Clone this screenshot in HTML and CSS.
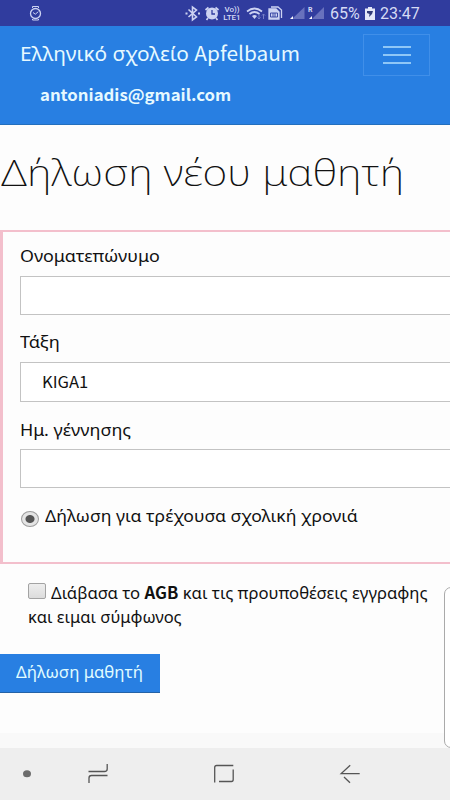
FILE: index.html
```html
<!DOCTYPE html>
<html lang="el">
<head>
<meta charset="utf-8">
<title>Δήλωση νέου μαθητή</title>
<link rel="stylesheet" href="styles.css">
</head>
<body>
<div class="status">
  <svg class="status-icons" width="335" height="26" viewBox="0 0 335 26" fill="none" stroke="#cdd3f2" stroke-width="1.3">
    <circle cx="35.500" cy="13.500" r="5"/><path d="M32.500 8V6.500h6V8M32.500 19v1h6v-1M33 12.500l2.300 1.700 3-2.500" stroke-width="1"/>
    <path d="M188.500 9.500l8 7.500-4 3V7l4 3-8 7" stroke-width="1.600"/><path d="M185.500 13.500h2M198 13.500h2" stroke-width="2"/>
    <circle cx="212" cy="13.500" r="6" fill="#cdd3f2" stroke="none"/><path d="M205.500 10l3-2.500M218.500 10l-3-2.500M208 18l-1.500 2M216 18l1.500 2" stroke-width="1.700"/><path d="M212 10v4h3" stroke="#303c9e"/>
    <path d="M247 11.500q7.500-6 15 0M249.500 14q5-4 10 0" stroke-width="1.700"/><path d="M252 16q2.500-2 5 0l-2.500 3z" fill="#cdd3f2" stroke="none"/>
    <path d="M259 14v5m-1.500-1.500L259 19l1.500-1.500M263.500 19v-5m-1.500 1.500l1.500-1.500 1.500 1.500" stroke="#7780c7" stroke-width="1"/>
    <path d="M271 7h7l3.500 3v8" /><path d="M269 9h7l3 3v7h-10z" fill="#cdd3f2"/><path d="M270.500 13h7v4h-7zM273 13v4M275 13v4" stroke="#303c9e" stroke-width=".9"/>
    <path d="M304.500 7v12H292z" fill="#6871bd" stroke="none"/><path d="M290 19h3v-3z" fill="#fff" stroke="none"/>
    <path d="M324 7v12h-12z" fill="#6871bd" stroke="none"/><path d="M309 19h3v-3z" fill="#fff" stroke="none"/>
  </svg>
  <span class="volte"><b>Vo))</b><b>LTE1</b></span>
  <span class="roaming">R</span>
  <span class="percent">65%</span>
  <svg class="battery" width="12" height="15" viewBox="0 0 12 15"><path d="M4 1h4v1.500h3V14H1V2.500h3z" fill="#e5e8f8"/><path d="M3 5h6L8 8l-3 3 .5-3L3 7z" fill="#343d78"/></svg>
  <span class="time">23:47</span>
</div>
<header>
  <div class="brand"><span class="brand-text">Ελληνικό σχολείο <span class="latin">Apfelbaum</span></span></div>
  <div class="mail latin"><span class="mail-text">antoniadis@gmail.com</span></div>
  <button class="menu" aria-label="Μενού"><i></i><i></i><i></i></button>
</header>
<main>
  <h1><span>Δήλωση νέου μαθητή</span></h1>
  <section class="panel">
    <label class="l1"><span>Ονοματεπώνυμο</span></label>
    <div class="field f1"></div>
    <label class="l2"><span>Τάξη</span></label>
    <div class="field f2 latin"><span>KIGA1</span></div>
    <label class="l3"><span>Ημ. γέννησης</span></label>
    <div class="field f3"></div>
    <div class="choice"><i class="radio"></i><span class="t-choice">Δήλωση για τρέχουσα σχολική χρονιά</span></div>
  </section>
  <div class="terms">
    <div class="line"><i class="check"></i><span class="t-terms1">Διάβασα το <b class="latin">AGB</b> και τις προυποθέσεις εγγραφης</span></div>
    <div class="line"><span class="t-terms2">και ειμαι σύμφωνος</span></div>
  </div>
  <button class="submit"><span>Δήλωση μαθητή</span></button>
</main>
<div class="edge"></div>
<nav>
  <svg width="450" height="52" viewBox="0 0 450 52" fill="none" stroke="#555" stroke-width="1.300">
    <ellipse cx="27" cy="25.700" rx="4" ry="3.500" fill="#6c6c6c" stroke="none"/>
    <path d="M88.500 23.500h16q2.700 0 2.700-2.500v-5M107.500 27.500h-16q-2.500 0-2.500 2.500v5"/>
    <path d="M214.700 34.500V19.500q0-2 2-2h16.600M219 33.500h12.500q1.700 0 1.700-2V21.500"/>
    <path d="M359.700 25.600h-18.500l9-8.400M344 29l6 5.800"/>
  </svg>
</nav>
</body>
</html>
```
FILE: styles.css
```css
* { box-sizing: border-box; }
body {
  margin: 0; width: 450px; height: 800px; overflow: hidden; position: relative;
  display: flex; flex-direction: column; background: #fdfdfd; color: #111;
  font: 16.5px/24px "Noto Sans", "Open Sans", sans-serif;
}
span { white-space: nowrap; }
.latin { font-family: "Noto Sans CJK SC", "Noto Sans", sans-serif; }
.status { height: 26px; flex: none; position: relative; background: #303c9e; color: #d6dbf4; font-family: Roboto, sans-serif; }
.status-icons { display: block; }
.status > span, .battery { position: absolute; }
.volte { left: 222px; top: 6px; width: 20px; font-size: 8px; line-height: 7.5px; text-align: center; }
.volte b { display: block; font-weight: 500; }
.roaming { left: 308px; top: 6px; font-size: 7px; line-height: 8px; font-weight: 700; }
.percent { left: 330px; top: 2px; font-size: 16px; line-height: 24px; }
.battery { left: 364px; top: 6px; }
.time { left: 380px; top: 2px; font-size: 16px; line-height: 24px; }
header { height: 99px; flex: none; position: relative; background: #287fe2; color: #e6f9ff; border-bottom: 1px solid #236fbd; }
.brand { padding: 13px 0 0 20px; font-size: 20px; line-height: 30px; }
.brand .latin { line-height: 20px; }
.mail { padding: 13px 0 0 40px; font-size: 16px; line-height: 24px; font-weight: 700; }
.brand-text, .mail-text, h1 span, label span, .t-choice, .t-terms1, .submit span, .f2 span { display: inline-block; transform-origin: 0 50%; }
.brand-text { transform: scaleX(1.041); }
.mail-text { transform: scaleX(1.046); }
h1 span { transform: scaleX(1.15); }
label span { transform: scaleX(1.083); }
.l2 span { transform: scaleX(1.1); }
.f2 span { transform: scaleX(1.035); }
.t-choice { transform: scaleX(1.065); }
.t-terms1 { transform: scaleX(1.01); }
.submit span { transform: scaleX(1.016); }
.menu {
  position: absolute; left: 363px; top: 8px; width: 67px; height: 42px; padding: 0;
  display: flex; flex-direction: column; align-items: center; justify-content: center; gap: 6px;
  border: 1px solid #408fe9; background: none;
}
.menu i { width: 28px; height: 2px; background: #8fc7f7; }
main { flex: 1; }
h1 { margin: 0; padding: 21px 0 0 1px; height: 105px; font-size: 37px; line-height: 52px; font-weight: 200; }
.panel { height: 334px; padding: 12px 0 0 17px; border: solid #f3bfcc; border-width: 2px 0 2px 3px; }
label { display: block; height: 24px; line-height: 24px; }
.field { border: 1px solid #c3c3c3; border-right: 0; height: 39px; background: #fff; }
.f1 { margin: 8px 0 15px; }
.f2 { margin: 8px 0 16px; height: 40px; padding-left: 21px; font-size: 16px; line-height: 36px; }
.f3 { margin: 7px 0 16px; }
.choice { display: flex; }
.radio { width: 18px; height: 16px; margin: 7px 6px 0 1px; border: 1px solid #9b9b9b; border-radius: 50%; background: radial-gradient(ellipse, #555 0 4px, #e4e4e4 5px); }
.terms { padding: 17px 0 0 28px; height: 90px; }
.line { display: flex; height: 24px; }
.line b { line-height: 20px; }
.check { width: 18px; height: 16px; margin: 2px 5px 0 0; border: 1px solid #a3a3a3; border-radius: 2px; background: linear-gradient(#eee, #dcdcdc); }
.submit { display: block; width: 160px; height: 39px; margin: 0; padding: 0 0 2px 16px; border: 0; background: #287fe2; color: #e0fcff; text-align: left; font: inherit; border-bottom: 1px solid #2462a7; }
.edge { position: absolute; left: 444px; top: 587px; width: 20px; height: 161px; border: 1px solid #aaa; border-radius: 7px; background: #fff; }
nav { height: 52px; flex: none; background: #eee; box-shadow: 0 -15px 0 #f9f9f9; }
nav svg { display: block; }
```
